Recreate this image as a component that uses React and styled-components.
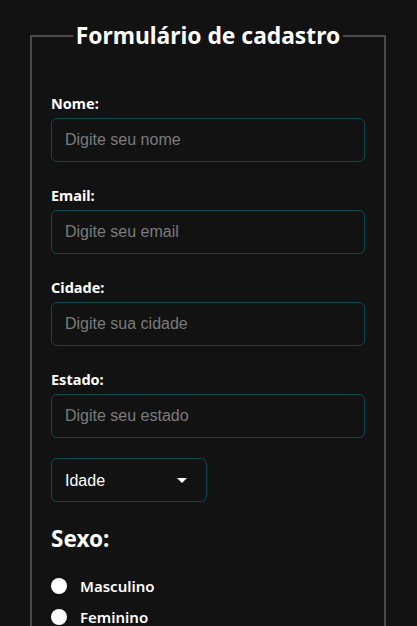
import { styled, createGlobalStyle } from "styled-components";

const GlobalStyle = createGlobalStyle`
  html, body {
    margin: 0;
    background: #121212;
    color: #ffffff;
    font-family: "Noto Sans", "Open Sans", sans-serif;
  }
`;

const campos = [
  { id: "nome", label: "Nome:", placeholder: "Digite seu nome" },
  { id: "email", label: "Email:", placeholder: "Digite seu email" },
  { id: "cidade", label: "Cidade:", placeholder: "Digite sua cidade" },
  { id: "estado", label: "Estado:", placeholder: "Digite seu estado" },
];

const App = () => {
  return (
    <>
      <GlobalStyle />
      <Wrapper>
        <Fieldset>
          <Legend>Formulário de cadastro</Legend>

          {campos.map((c) => (
            <Group key={c.id}>
              <Label htmlFor={c.id}>{c.label}</Label>
              <Input id={c.id} type="text" placeholder={c.placeholder} />
            </Group>
          ))}

          {/* Idade */}
          <SelectBox>
            <Select defaultValue="">
              <option value="">Idade</option>
            </Select>
            <Caret width="10" height="5" viewBox="0 0 10 5">
              <path d="M0 0h10L5 5z" fill="#fff" />
            </Caret>
          </SelectBox>

          <Title>Sexo:</Title>
          <Radios>
            <RadioRow>
              <Radio type="radio" name="sexo" />
              Masculino
            </RadioRow>
            <RadioRow>
              <Radio type="radio" name="sexo" />
              Feminino
            </RadioRow>
          </Radios>
        </Fieldset>
      </Wrapper>
    </>
  );
};

const Wrapper = styled.div`
  padding: 21px 31px 0 30px;
`;

const Fieldset = styled.fieldset`
  margin: 0;
  padding: 42px 19px 40px 19px;
  border: 2px solid #4a4a4a;
  border-bottom: none;
  min-width: 0;
`;

const Legend = styled.legend`
  margin: 0 auto;
  padding: 0 3px;
  font-size: 22.8px;
  font-weight: 700;
  line-height: 30px;
  color: #fff;
`;

const Group = styled.div`
  display: flex;
  flex-direction: column;
  gap: 5px;
  margin-bottom: 23px;
`;

const Label = styled.label`
  font-size: 14.5px;
  font-weight: 700;
  line-height: 20px;
`;

const Input = styled.input`
  box-sizing: border-box;
  height: 44px;
  width: 100%;
  padding: 0 13px;
  background: #121212;
  border: 1px solid #0d4a50;
  border-radius: 6px;
  color: #fff;
  font-family: "Liberation Sans", Arial, sans-serif;
  font-size: 16px;
  outline: none;

  &::placeholder {
    color: #7b7b7b;
  }
`;

const SelectBox = styled.div`
  position: relative;
  width: 156px;
  margin-top: -3px;
`;

const Select = styled.select`
  appearance: none;
  box-sizing: border-box;
  width: 100%;
  height: 44px;
  padding: 0 13px;
  background: #121212;
  border: 1px solid #0d4a50;
  border-radius: 6px;
  color: #fff;
  font-family: "Liberation Sans", Arial, sans-serif;
  font-size: 16px;
  outline: none;
`;

const Caret = styled.svg`
  position: absolute;
  right: 20px;
  top: 20px;
  pointer-events: none;
`;

const Title = styled.h2`
  margin: 22px 0 0;
  font-size: 22.5px;
  font-weight: 700;
  line-height: 30px;
`;

const Radios = styled.div`
  display: flex;
  flex-direction: column;
  gap: 9px;
  margin-top: 21px;
`;

const RadioRow = styled.label`
  display: flex;
  align-items: center;
  gap: 13px;
  font-size: 15px;
  font-weight: 600;
  line-height: 22px;
`;

const Radio = styled.input`
  appearance: none;
  margin: 0;
  width: 16px;
  height: 16px;
  border-radius: 50%;
  background: #fff;
`;

export default App;
